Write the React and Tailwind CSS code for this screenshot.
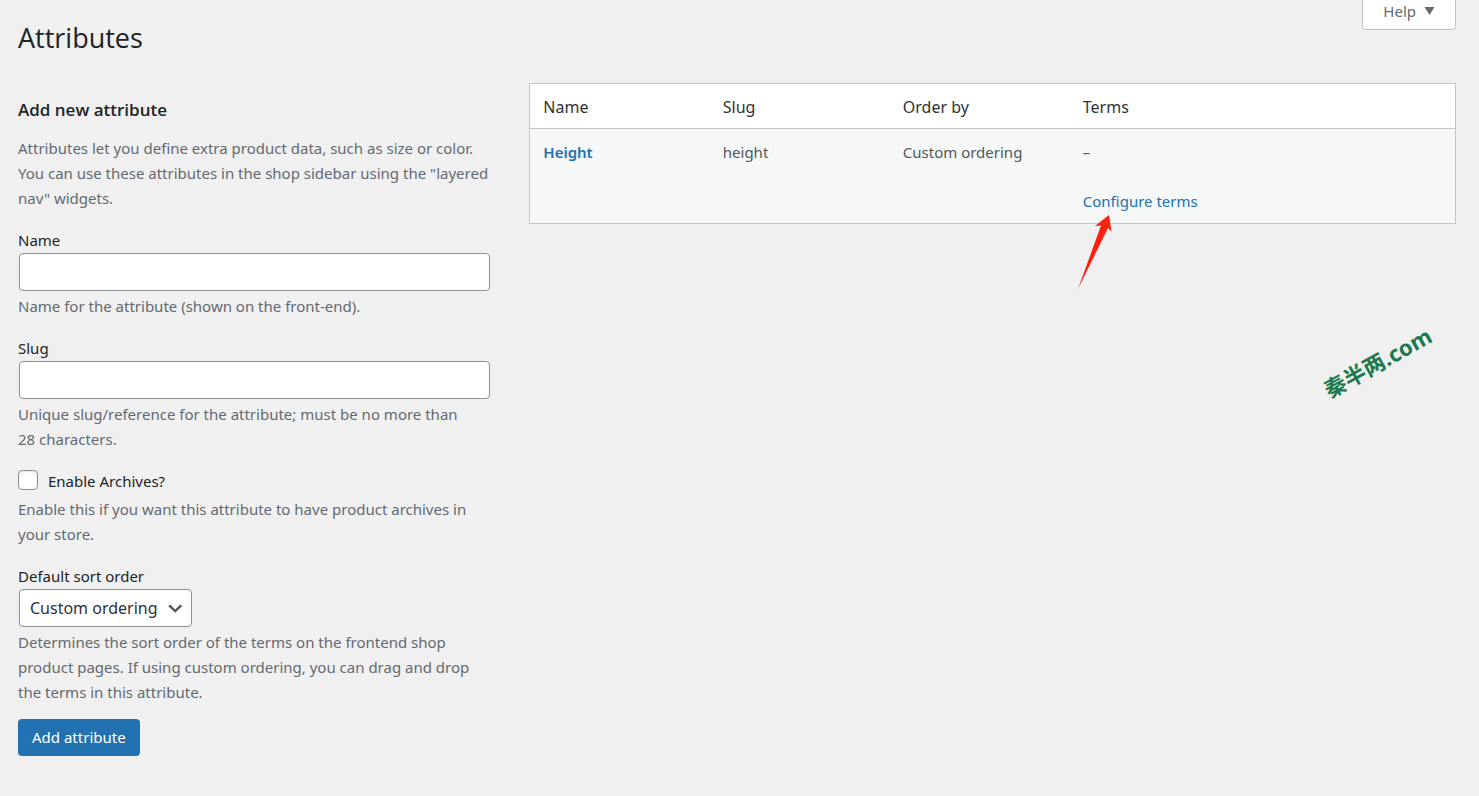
import React, { useState } from "react";

const columns = ["Name", "Slug", "Order by", "Terms"];

const attributes = [
  { name: "Height", slug: "height", orderBy: "Custom ordering", terms: "–" },
];

const sortOptions = ["Custom ordering", "Name", "Name (numeric)", "Term ID"];

const Description = ({ id, children }) => (
  <p id={id} className="mt-[3px] pr-5 text-[#646970]">
    {children}
  </p>
);

const TextField = ({ id, label, description }) => {
  const [value, setValue] = useState("");

  return (
    <div>
      <label htmlFor={id} className="block">
        {label}
      </label>
      <div className="flex px-px">
        <input
          id={id}
          type="text"
          value={value}
          aria-describedby={`${id}-description`}
          onChange={(event) => setValue(event.target.value)}
          className="h-[38px] w-full rounded border border-[#8c8f94] bg-white px-2 text-[#2c3338]"
        />
      </div>
      <Description id={`${id}-description`}>{description}</Description>
    </div>
  );
};

const AddAttributeForm = () => (
  <form className="flex flex-col gap-[17px] pt-[14px]" onSubmit={(event) => event.preventDefault()}>
    <div>
      <h2 className="font-['Open_Sans',sans-serif] text-[17px] leading-[25px] font-semibold">
        Add new attribute
      </h2>
      <p className="mt-[14px] text-[#646970]">
        Attributes let you define extra product data, such as size or color. You
        can use these attributes in the shop sidebar using the "layered nav"
        widgets.
      </p>
    </div>

    <TextField
      id="attribute-name"
      label="Name"
      description="Name for the attribute (shown on the front-end)."
    />
    <TextField
      id="attribute-slug"
      label="Slug"
      description="Unique slug/reference for the attribute; must be no more than 28 characters."
    />

    <div>
      <label htmlFor="attribute-public" className="flex items-start gap-[10px]">
        <input
          id="attribute-public"
          type="checkbox"
          className="mt-px size-5 appearance-none rounded border border-[#8c8f94] bg-white shadow-[inset_0_1px_2px_rgba(0,0,0,0.1)] checked:bg-[#2271b1]"
        />
        Enable Archives?
      </label>
      <Description>
        Enable this if you want this attribute to have product archives in your
        store.
      </Description>
    </div>

    <div>
      <label htmlFor="attribute-orderby" className="block">
        Default sort order
      </label>
      <div className="flex px-px">
        <div className="relative">
          <select
            id="attribute-orderby"
            className="h-[38px] w-[173px] appearance-none rounded border border-[#8c8f94] bg-white pr-7 pl-[10px] text-base text-[#2c3338]"
          >
            {sortOptions.map((option) => (
              <option key={option}>{option}</option>
            ))}
          </select>
          <svg
            className="pointer-events-none absolute top-3 right-2 size-4"
            viewBox="0 0 16 16"
            fill="none"
            stroke="#50575e"
            strokeWidth="2.4"
          >
            <path d="M1.2 4.4 7.2 10.2l6-5.8" />
          </svg>
        </div>
      </div>
      <Description>
        Determines the sort order of the terms on the frontend shop product
        pages. If using custom ordering, you can drag and drop the terms in this
        attribute.
      </Description>
      <button
        type="submit"
        className="mt-[14px] h-[37px] rounded bg-[#2271b1] px-[14px] text-white"
      >
        Add attribute
      </button>
    </div>
  </form>
);

const AttributesTable = () => (
  <table className="w-full table-fixed border-collapse border border-[#c3c4c7] bg-white text-left">
    <thead>
      <tr className="h-[45px] border-b border-[#c3c4c7] text-base text-[#2c3338]">
        {columns.map((column) => (
          <th key={column} className="w-[180px] px-[13px] pt-0.5 font-normal last:w-auto">
            {column}
          </th>
        ))}
      </tr>
    </thead>
    <tbody>
      {attributes.map((item) => (
        <tr key={item.slug} className="h-[95px] bg-[#f6f7f7] align-top text-[#50575e]">
          <td className="px-[13px] pt-[11px] font-semibold">
            <a href="#edit" className="text-[#2271b1]">{item.name}</a>
          </td>
          <td className="px-[13px] pt-[11px]">{item.slug}</td>
          <td className="px-[13px] pt-[11px]">{item.orderBy}</td>
          <td className="px-[13px] pt-[11px]">
            <p>{item.terms}</p>
            <div className="relative mt-6">
              <a href="#terms" className="text-[#2271b1]">Configure terms</a>
              {/* pointer to the terms link */}
              <svg
                className="absolute top-[25px] left-[-6px] h-[76px] w-[36px]"
                viewBox="0 0 36 76"
                fill="#ff2010"
              >
                <path d="M32 1 18 12l6-.5L1 75 31 14l3.500 3.500z" />
              </svg>
            </div>
          </td>
        </tr>
      ))}
    </tbody>
  </table>
);

const App = () => {
  return (
    <div className="relative min-h-screen bg-[#f0f0f1] pr-[23px] pl-[18px] font-['Noto_Sans',sans-serif] text-[15px] leading-[25px] text-[#1d2327]">
      <header className="flex items-start justify-between">
        <h1 className="pt-[19px] font-['Open_Sans',sans-serif] text-[27px] leading-[38px]">
          Attributes
        </h1>
        <button
          type="button"
          className="flex h-[30px] items-start gap-2 rounded-b border border-t-0 border-[#c3c4c7] bg-white px-5 leading-[22px] text-[#646970]"
        >
          Help
          <svg className="mt-[7px] h-2 w-[11px]" viewBox="0 0 10 8" fill="#646970">
            <path d="M0 0h10L5 8z" />
          </svg>
        </button>
      </header>

      <main className="flex items-start pt-[26px] pb-10">
        <section className="w-[35%] pr-[30px]">
          <AddAttributeForm />
        </section>
        <section className="w-[65%] pl-2">
          <AttributesTable />
        </section>
      </main>

      <div className="absolute top-[346px] right-[42px] -rotate-[29deg] font-['Noto_Sans','Noto_Sans_CJK_SC',sans-serif] text-[22px] leading-8 font-bold whitespace-nowrap text-[#1a7a4e]">
        秦半两.com
      </div>
    </div>
  );
};

export default App;
